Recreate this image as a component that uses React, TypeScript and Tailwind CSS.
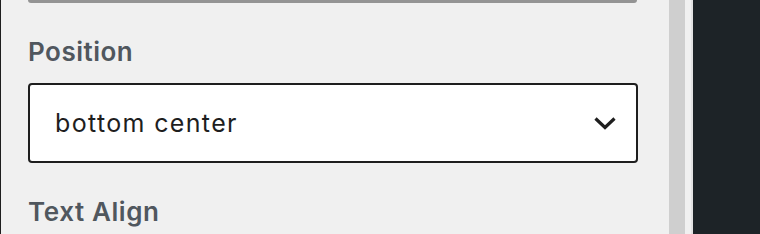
export default function App() {
  return (
    <div className="flex h-[234px] w-[760px] overflow-hidden bg-[#f0f0f0] font-['Inter',sans-serif]">
      <div className="w-[669px] shrink-0 border-l border-[#1e1e1e] pl-[27px]">
        <div className="h-[3px] w-[609px] rounded-b-[3px] bg-[#949494]" />
        <div className="mt-[33px] text-[26px] leading-[32px] font-semibold tracking-[0.5px] text-[#50575e]">Position</div>
        <div className="mt-[15px] flex h-[80px] w-[610px] items-center justify-between rounded-[4px] border-2 border-[#1e1e1e] bg-white pl-[25px] pr-[20px]">
          <span className="text-[25px] leading-[30px] tracking-[1.35px] text-[#1e1e1e]">bottom center</span>
          <svg width="22" height="13" viewBox="0 0 22 13" className="shrink-0">
            <polyline points="1.5,1.5 11,10.5 20.5,1.5" fill="none" stroke="#1e1e1e" strokeWidth="3.2" />
          </svg>
        </div>
        <div className="mt-[33px] text-[26px] leading-[32px] font-semibold tracking-[0.6px] text-[#50575e]">Text Align</div>
      </div>
      <div className="w-[16px] shrink-0 bg-[#cfcfcf]" />
      <div className="w-[8px] shrink-0 border-r-2 border-[#e2e2e2]" />
      <div className="flex-1 bg-[#1d2327]" />
    </div>
  );
}
